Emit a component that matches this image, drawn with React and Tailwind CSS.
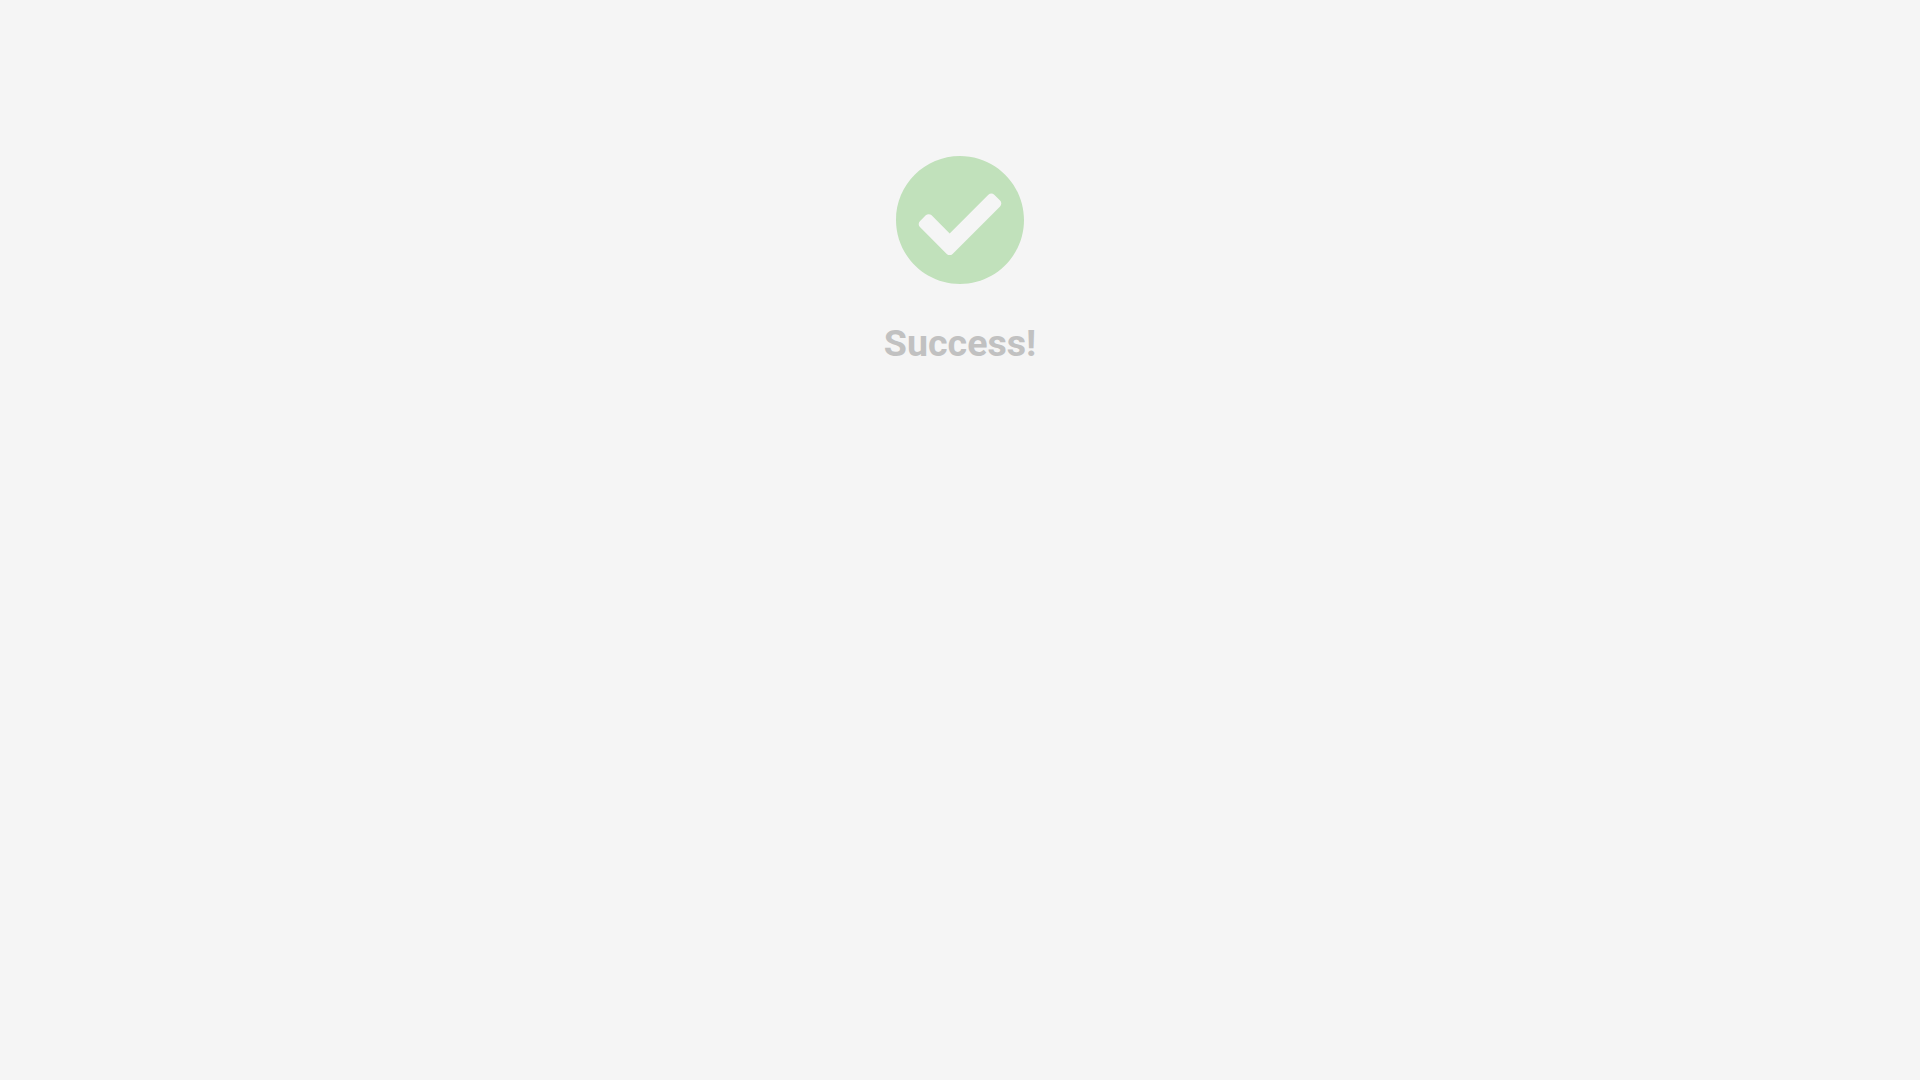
export default function App() {
  return (
    <div className="min-h-screen bg-[#f5f5f5] flex flex-col items-center pt-[156px]">
      <svg viewBox="8 8 496 496" className="w-32 h-32 fill-[#c1e1bb]">
        <path d="M504 256c0 136.967-111.033 248-248 248S8 392.967 8 256 119.033 8 256 8s248 111.033 248 248zM227.314 387.314l184-184c6.248-6.248 6.248-16.379 0-22.627l-22.627-22.627c-6.248-6.249-16.379-6.249-22.628 0L216 308.118l-70.059-70.059c-6.248-6.248-16.379-6.248-22.628 0l-22.627 22.627c-6.248 6.248-6.248 16.379 0 22.627l104 104c6.249 6.249 16.379 6.249 22.628.001z" />
      </svg>
      <h1 className="mt-[39px] text-[37.6px] leading-10 font-bold text-[#c1c1c1] font-['Roboto',sans-serif]">Success!</h1>
    </div>
  )
}
